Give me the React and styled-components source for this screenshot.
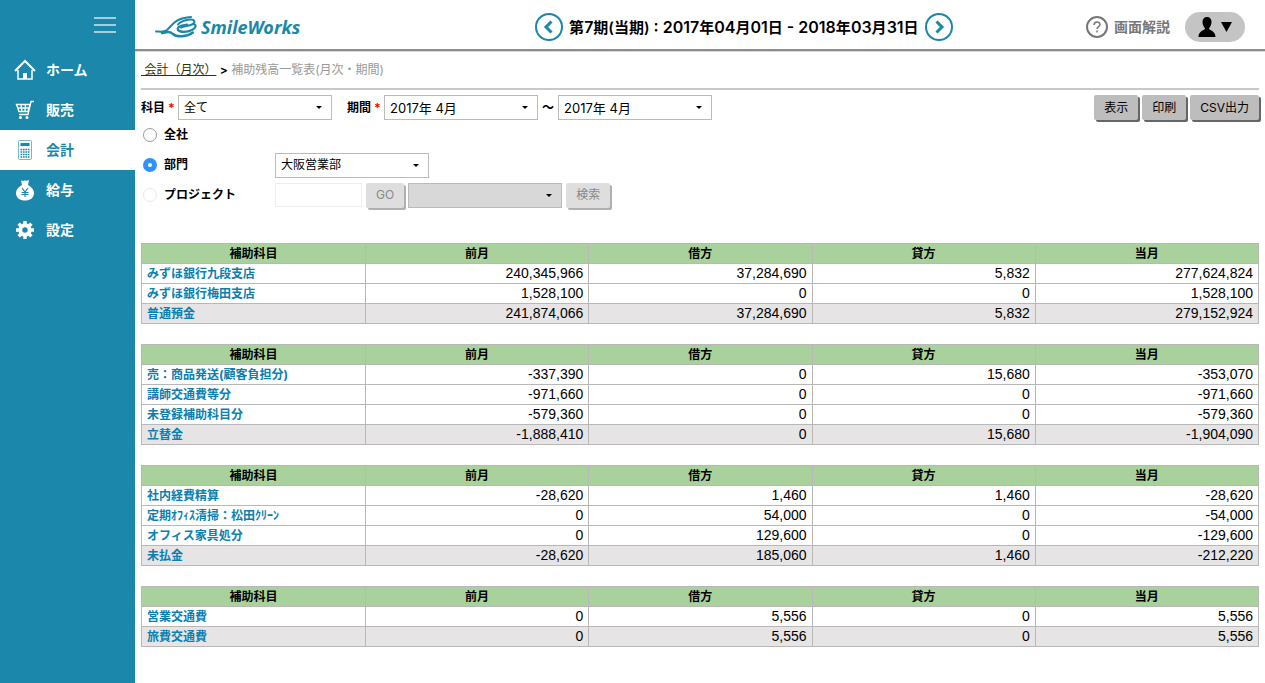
import React from "react";
import styled, { createGlobalStyle } from "styled-components";

const brand = "#1b87aa";

const GlobalStyle = createGlobalStyle`
  *, *::before, *::after { box-sizing: border-box; }
  body {
    margin: 0;
    background: #fff;
    color: #000;
    font: 12px/20px Inter, "Noto Sans CJK JP", sans-serif;
  }
  button, input, select { font: inherit; color: inherit; margin: 0; }
`;

const Page = styled.div`
  display: flex;
  min-height: 100vh;
`;

const Sidebar = styled.aside`
  flex: 0 0 135px;
  background: ${brand};
`;

const MenuToggle = styled.button`
  display: block;
  margin: 0 16px 0 auto;
  height: 50px;
  padding: 0 3px;
  border: 0;
  background: none;
  line-height: 0;
`;

const NavLink = styled.a`
  display: flex;
  align-items: center;
  gap: 9px;
  height: 40px;
  padding: 0 13px;
  font-size: 14px;
  font-weight: 700;
  text-decoration: none;
  color: ${(p) => (p.$active ? brand : "#fff")};
  background: ${(p) => (p.$active ? "#fff" : "transparent")};
`;

const Main = styled.div`
  flex: 1;
  min-width: 0;
`;

const Header = styled.header`
  display: grid;
  grid-template-columns: 13fr auto 10fr;
  align-items: center;
  height: 51px;
  padding: 5px 20px 0;
  border-bottom: 2px solid #8c8c8c;
  box-shadow: 0 1px 0 #d8d8d8;
`;

const Logo = styled.a`
  display: flex;
  align-items: center;
  gap: 4px;
  color: ${brand};
  font: italic 700 18px/24px "Noto Sans", sans-serif;
  text-decoration: none;
`;

const Term = styled.div`
  display: flex;
  align-items: center;
  gap: 6px;
  font-size: 15px;
  font-weight: 600;
  white-space: nowrap;
`;

const Figures = styled.span`
  font-size: 16px;
`;

const RoundButton = styled.button`
  display: block;
  padding: 0;
  border: 0;
  background: none;
  line-height: 0;
`;

const HeaderTools = styled.div`
  display: flex;
  justify-content: flex-end;
  align-items: center;
  gap: 15px;
`;

const HelpLink = styled.a`
  display: flex;
  align-items: center;
  gap: 6px;
  color: #777;
  font-size: 14px;
  font-weight: 700;
  text-decoration: none;
`;

const UserButton = styled.button`
  display: flex;
  align-items: center;
  justify-content: center;
  gap: 5px;
  width: 60px;
  height: 30px;
  padding: 0;
  border: 0;
  border-radius: 15px;
  background: #c4c4c4;
`;

const Content = styled.main`
  padding: 0 6px;
`;

const Crumbs = styled.nav`
  height: 39px;
  padding-top: 9px;
  border-bottom: 2px solid #c8c8c8;
  color: #999;
  white-space: pre;

  a { color: #330; }
  span { color: #000; font-weight: 600; }
`;

const Filters = styled.form`
  display: flex;
  justify-content: space-between;
  align-items: flex-start;
  padding-top: 5px;
  margin-bottom: 33px;
`;

const Fields = styled.div`
  display: flex;
  flex-direction: column;
`;

const FieldRow = styled.div`
  display: flex;
  align-items: center;
  gap: 4px;
  height: ${(p) => p.$height || 30}px;
`;

const FieldLabel = styled.label`
  font-weight: 700;
  white-space: nowrap;
  margin-left: ${(p) => (p.$spaced ? 11 : 0)}px;
`;

const Required = styled.span`
  display: inline-block;
  margin-left: 3px;
  width: 6px;
  color: #f00;
`;

const SelectBox = styled.span`
  position: relative;
  display: block;
  width: 154px;

  svg {
    position: absolute;
    right: 10px;
    top: 10px;
    pointer-events: none;
  }
`;

const SelectControl = styled.select`
  display: block;
  appearance: none;
  width: 100%;
  height: 25px;
  padding: 0 5px;
  border: 1px solid #bbb;
  border-radius: 0;
  background: #fff;
  font-size: ${(p) => (p.$period ? 13 : 12)}px;
  opacity: 1;

  &:disabled { background: #d8d8d8; }
`;

const RadioLabel = styled.label`
  display: flex;
  align-items: center;
  gap: 7px;
  width: 130px;
  padding-left: 2px;
  font-weight: 700;
`;

const Radio = styled.input`
  appearance: none;
  width: 14px;
  height: 14px;
  border: 1px solid #999;
  border-radius: 50%;
  background: #fff;

  &:checked { border: 5px solid #3290ff; }
  &:disabled { border-color: #e8e8e8; }
`;

const CodeInput = styled.input`
  width: 87px;
  height: 24px;
  border: 1px solid #eee;
  background: #fff;
`;

const ActionButton = styled.button`
  height: 25px;
  padding: 0 10px;
  border: 0;
  border-radius: 2px;
  background: #bdbdbd;
  box-shadow: 2px 2px 0 #666;
  white-space: nowrap;

  &:disabled {
    background: #dedede;
    color: #888;
    box-shadow: 2px 2px 0 #b0b0b0;
  }
`;

const Actions = styled.div`
  display: flex;
  gap: 4px;
`;

const BalanceTable = styled.table`
  width: 100%;
  margin-bottom: 20px;
  table-layout: fixed;
  border-collapse: collapse;

  th, td {
    height: 20px;
    padding: 0 5px;
    border: 1px solid #b8b8b8;
    line-height: 18px;
  }
  thead th { background: #a8d19c; }
  thead th:first-child { width: 224px; }
`;

const BalanceRow = styled.tr`
  background: ${(p) => (p.$total ? "#e6e4e5" : "#fff")};

  th { text-align: left; }
  a { color: #0b80b0; text-decoration: none; }
  td {
    padding-bottom: 2px;
    text-align: right;
    font-family: "Liberation Sans", sans-serif;
    font-size: 14px;
    line-height: 16px;
  }
`;

const HomeIcon = () => (
  <svg width="24" height="24" viewBox="0 0 24 24" fill="none" stroke="currentColor" strokeWidth="2">
    <path d="M2 13 12 3l10 10" />
    <path d="M5 12v9h14v-9" strokeWidth="1.500" />
    <path d="M10 15h4v6h-4z" fill="currentColor" stroke="none" />
  </svg>
);

const CartIcon = () => (
  <svg width="24" height="24" viewBox="0 0 24 24" fill="none" stroke="currentColor" strokeWidth="1.400">
    <path d="M21 3.500h-3l-3 13H6M3.500 6.500h13.500l-2 7H6zM8 6.500l1 7M12.500 6.500l-.5 7M4.500 10h11.500" />
    <circle cx="7.500" cy="19.500" r="1.500" fill="currentColor" stroke="none" />
    <circle cx="14" cy="19.500" r="1.500" fill="currentColor" stroke="none" />
  </svg>
);

const CalculatorIcon = () => (
  <svg width="24" height="24" viewBox="0 0 24 24" fill="none" stroke="currentColor">
    <rect x="5.500" y="2.500" width="13" height="19" rx="1" opacity=".6" />
    <path d="M7.500 5h9v3h-9z" fill="currentColor" stroke="none" />
    <path d="M7.500 11.500h9M7.500 14h9M7.500 16.500h9M7.500 19h9" strokeWidth="1.500" strokeDasharray="1.700 .73" />
  </svg>
);

const MoneyBagIcon = () => (
  <svg width="24" height="24" viewBox="0 0 24 24">
    <path fill="currentColor" d="M8 2.500l3 .5 1-1 1 1 3-1-1 5c4 2 6 5 6 8 0 5-4 7.500-9 7.500S3 20 3 15c0-3 2-6 6-8z" />
    <path d="M9 10l3 4 3-4M12 14v5M8.500 14.500h7M8.500 16.500h7" fill="none" stroke={brand} strokeWidth="1.200" />
  </svg>
);

const GearIcon = () => (
  <svg width="24" height="24" viewBox="0 0 24 24">
    <circle cx="12" cy="12" r="4.700" fill="none" stroke="currentColor" strokeWidth="4" />
    <g stroke="currentColor" strokeWidth="3.400">
      <path d="M12 3v3M12 18v3M3 12h3M18 12h3M5.600 5.600l2.200 2.200M16.200 16.200l2.200 2.200M5.600 18.400l2.200-2.200M16.200 7.800l2.200-2.200" />
    </g>
  </svg>
);

const LogoMark = () => (
  <svg width="42" height="24" viewBox="0 0 42 24" fill="none" stroke="currentColor" strokeLinecap="round">
    <path d="M1 16.500c4 0 8 1 11-1.500C17 10.500 20 3 36 2" strokeWidth="2" />
    <path d="M7 18c5-1 8-2 11 1 4 3.500 14 3 20-1.500" strokeWidth="2.400" />
    <path d="M23 9.500c3-4 8-4.500 12-5 5-.5 6 3 2 5-3 1.500-8 1.500-11 3" strokeWidth="2" />
    <path d="M38 9c4 .5 3 4-1 6-5 2.500-12 2.500-14 0-1.500-3 4-5 9-5.500" strokeWidth="2.200" />
  </svg>
);

const Chevron = ({ next }) => (
  <svg width="28" height="28" viewBox="0 0 28 28" fill="none" stroke={brand}>
    <circle cx="14" cy="14" r="13" strokeWidth="2" />
    <path d={next ? "M11.500 8.500 17 14l-5.500 5.500" : "M16.500 8.500 11 14l5.500 5.500"} strokeWidth="3" />
  </svg>
);

const navItems = [
  { label: "ホーム", Icon: HomeIcon },
  { label: "販売", Icon: CartIcon },
  { label: "会計", Icon: CalculatorIcon, active: true },
  { label: "給与", Icon: MoneyBagIcon },
  { label: "設定", Icon: GearIcon },
];

const termText = "第7期(当期) : 2017年04月01日 - 2018年03月31日";

const columns = ["補助科目", "前月", "借方", "貸方", "当月"];

const groups = [
  [
    ["みずほ銀行九段支店", "240,345,966", "37,284,690", "5,832", "277,624,824"],
    ["みずほ銀行梅田支店", "1,528,100", "0", "0", "1,528,100"],
    ["普通預金", "241,874,066", "37,284,690", "5,832", "279,152,924"],
  ],
  [
    ["売：商品発送(顧客負担分)", "-337,390", "0", "15,680", "-353,070"],
    ["講師交通費等分", "-971,660", "0", "0", "-971,660"],
    ["未登録補助科目分", "-579,360", "0", "0", "-579,360"],
    ["立替金", "-1,888,410", "0", "15,680", "-1,904,090"],
  ],
  [
    ["社内経費精算", "-28,620", "1,460", "1,460", "-28,620"],
    ["定期ｵﾌｨｽ清掃：松田ｸﾘｰﾝ", "0", "54,000", "0", "-54,000"],
    ["オフィス家具処分", "0", "129,600", "0", "-129,600"],
    ["未払金", "-28,620", "185,060", "1,460", "-212,220"],
  ],
  [
    ["営業交通費", "0", "5,556", "0", "5,556"],
    ["旅費交通費", "0", "5,556", "0", "5,556"],
  ],
];

function Select({ options, ...rest }) {
  return (
    <SelectBox>
      <SelectControl {...rest}>
        {options.map((o) => <option key={o}>{o}</option>)}
      </SelectControl>
      <svg width="6" height="5" viewBox="0 0 6 5"><path d="M0 1h6L3 4z" /></svg>
    </SelectBox>
  );
}

// Sets the digits and the punctuation between them larger than the kanji.
function TermLabel({ text }) {
  return (
    <span>
      {text.split(/([\d :-]+)/).map((part, i) =>
        i % 2 ? <Figures key={i}>{part}</Figures> : part
      )}
    </span>
  );
}

export default function App() {
  return (
    <Page>
      <GlobalStyle />
      <Sidebar>
        <MenuToggle aria-label="メニュー">
          <svg width="22" height="18" viewBox="0 0 22 18" stroke="#a4cfdd" strokeWidth="2">
            <path d="M0 2h22M0 9h22M0 16h22" />
          </svg>
        </MenuToggle>
        <nav>
          {navItems.map(({ label, Icon, active }) => (
            <NavLink key={label} href="#" $active={active}><Icon />{label}</NavLink>
          ))}
        </nav>
      </Sidebar>
      <Main>
        <Header>
          <Logo href="#"><LogoMark />SmileWorks</Logo>
          <Term>
            <RoundButton aria-label="前の期"><Chevron /></RoundButton>
            <TermLabel text={termText} />
            <RoundButton aria-label="次の期"><Chevron next /></RoundButton>
          </Term>
          <HeaderTools>
            <HelpLink href="#">
              <svg width="22" height="22" viewBox="0 0 22 22" fill="none" stroke="currentColor">
                <circle cx="11" cy="11" r="10" strokeWidth="2" />
                <path d="M8 9c0-4 6-4 6-.5 0 2-3 2.200-3 4.500M11 14.500v2" strokeWidth="1.500" />
              </svg>
              画面解説
            </HelpLink>
            <UserButton aria-label="ユーザー">
              <svg width="18" height="20" viewBox="0 0 18 20">
                <path d="M9 0c3 0 4.500 2 4.500 5S12 10 11 11.500c0 2 6.500 2 6.500 8.500H.5C.5 13.500 7 13.500 7 11.500 6 10 4.500 8 4.500 5S6 0 9 0z" />
              </svg>
              <svg width="11" height="10" viewBox="0 0 11 10"><path d="M0 0h11L5.500 10z" /></svg>
            </UserButton>
          </HeaderTools>
        </Header>
        <Content>
          <Crumbs><a href="#"> 会計（月次）</a> <span>&gt;</span> 補助残高一覧表(月次・期間)</Crumbs>
          <Filters>
            <Fields>
              <FieldRow $height={25}>
                <FieldLabel htmlFor="account">科目<Required>*</Required></FieldLabel>
                <Select id="account" options={["全て"]} />
                <FieldLabel htmlFor="from" $spaced>期間<Required>*</Required></FieldLabel>
                <Select id="from" $period options={["2017年 4月"]} />
                <FieldLabel htmlFor="to">〜</FieldLabel>
                <Select id="to" $period options={["2017年 4月"]} />
              </FieldRow>
              <FieldRow>
                <RadioLabel><Radio type="radio" name="scope" />全社</RadioLabel>
              </FieldRow>
              <FieldRow>
                <RadioLabel><Radio type="radio" name="scope" defaultChecked />部門</RadioLabel>
                <Select aria-label="部門" options={["大阪営業部"]} />
              </FieldRow>
              <FieldRow>
                <RadioLabel><Radio type="radio" name="scope" disabled />プロジェクト</RadioLabel>
                <CodeInput aria-label="プロジェクトコード" disabled />
                <ActionButton type="button" disabled>GO</ActionButton>
                <Select aria-label="プロジェクト" options={[""]} disabled />
                <ActionButton type="button" disabled>検索</ActionButton>
              </FieldRow>
            </Fields>
            <Actions>
              <ActionButton type="button">表示</ActionButton>
              <ActionButton type="button">印刷</ActionButton>
              <ActionButton type="button">CSV出力</ActionButton>
            </Actions>
          </Filters>
          {groups.map((rows) => (
            <BalanceTable key={rows[0][0]}>
              <thead>
                <tr>{columns.map((c) => <th key={c} scope="col">{c}</th>)}</tr>
              </thead>
              <tbody>
                {rows.map(([name, ...values], i) => (
                  <BalanceRow key={name} $total={i === rows.length - 1}>
                    <th scope="row"><a href="#">{name}</a></th>
                    {values.map((v, j) => <td key={j}>{v}</td>)}
                  </BalanceRow>
                ))}
              </tbody>
            </BalanceTable>
          ))}
        </Content>
      </Main>
    </Page>
  );
}
